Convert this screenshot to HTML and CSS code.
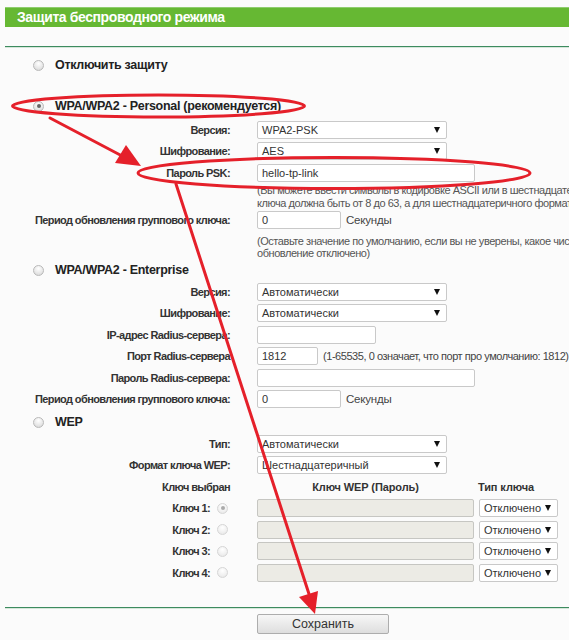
FILE: index.html
```html
<!DOCTYPE html>
<html lang="ru">
<head>
<meta charset="utf-8">
<link rel="stylesheet" href="styles.css">
</head>
<body>
<div class="page">
  <div class="hdr">Защита беспроводного режима</div>
  <div class="rule"></div>

  <div class="opt opt-first"><span class="radio"></span><span>Отключить защиту</span></div>

  <div class="opt opt-wpa"><span class="radio on"></span><span>WPA/WPA2 - Personal (рекомендуется)</span></div>
  <div class="field first"><div class="lbl">Версия:</div><div class="sel w190">WPA2-PSK</div></div>
  <div class="field"><div class="lbl">Шифрование:</div><div class="sel w190">AES</div></div>
  <div class="field"><div class="lbl">Пароль PSK:</div><div class="inp w218">hello-tp-link</div></div>
  <div class="help">(Вы можете ввести символы в кодировке ASCII или в шестнадцатеричном формате. Длина<br>ключа должна быть от 8 до 63, а для шестнадцатеричного формата - 64.)</div>
  <div class="field"><div class="lbl">Период обновления группового ключа:</div><div class="inp w84">0</div><span class="unit">Секунды</span></div>
  <div class="help note">(Оставьте значение по умолчанию, если вы не уверены, какое число ввести. 0 означает, что<br>обновление отключено)</div>

  <div class="opt"><span class="radio"></span><span>WPA/WPA2 - Enterprise</span></div>
  <div class="field"><div class="lbl">Версия:</div><div class="sel w190">Автоматически</div></div>
  <div class="field"><div class="lbl">Шифрование:</div><div class="sel w190">Автоматически</div></div>
  <div class="field"><div class="lbl">IP-адрес Radius-сервера:</div><div class="inp w119"></div></div>
  <div class="field"><div class="lbl">Порт Radius-сервера</div><div class="inp w61">1812</div><span class="unit port">(1-65535, 0 означает, что порт про умолчанию: 1812)</span></div>
  <div class="field"><div class="lbl">Пароль Radius-сервера:</div><div class="inp w218"></div></div>
  <div class="field"><div class="lbl">Период обновления группового ключа:</div><div class="inp w84">0</div><span class="unit">Секунды</span></div>

  <div class="opt opt-wep"><span class="radio"></span><span>WEP</span></div>
  <div class="field"><div class="lbl">Тип:</div><div class="sel w190">Автоматически</div></div>
  <div class="field"><div class="lbl">Формат ключа WEP:</div><div class="sel w190">Шестнадцатеричный</div></div>
  <div class="field"><div class="lbl">Ключ выбран</div><div class="colhead w217">Ключ WEP (Пароль)</div><div class="colhead type">Тип ключа</div></div>
  <div class="field"><div class="lbl key">Ключ 1:<span class="radio dis on"></span></div><div class="inp off w217"></div><div class="sel w79">Отключено</div></div>
  <div class="field"><div class="lbl key">Ключ 2:<span class="radio dis"></span></div><div class="inp off w217"></div><div class="sel w79">Отключено</div></div>
  <div class="field"><div class="lbl key">Ключ 3:<span class="radio dis"></span></div><div class="inp off w217"></div><div class="sel w79">Отключено</div></div>
  <div class="field"><div class="lbl key">Ключ 4:<span class="radio dis"></span></div><div class="inp off w217"></div><div class="sel w79">Отключено</div></div>

  <div class="rule rule-bottom"></div>
  <div class="actions"><button class="btn" type="button">Сохранить</button></div>

  <svg class="marks" width="569" height="640" viewBox="0 0 569 640" aria-hidden="true">
    <g fill="none" stroke="#e5202a" stroke-width="3" stroke-linecap="round">
      <ellipse cx="158.5" cy="106" rx="146" ry="11"/>
      <ellipse cx="334" cy="173" rx="196" ry="15.5"/>
      <line x1="50" y1="118" x2="124" y2="157"/>
      <line x1="176" y1="184" x2="309" y2="594"/>
    </g>
    <g fill="#e5202a">
      <polygon points="141,166 115,163 126,145"/>
      <polygon points="315,614 299,597 318,591"/>
    </g>
  </svg>
</div>
</body>
</html>
```
FILE: styles.css
```css
html, body {
  margin: 0;
  padding: 0;
}
body {
  width: 569px;
  height: 640px;
  overflow: hidden;
  background: #fbfbfb;
  font-family: "Liberation Sans", Arial, sans-serif;
  color: #333;
}
.page {
  position: relative;
  padding-top: 7px;
  height: 633px;
}
.hdr {
  margin-left: 5px;
  height: 20px;
  box-sizing: border-box;
  background: #66b833;
  border-top: 1px solid #8fcd6e;
  color: #fff;
  font-weight: bold;
  font-size: 14px;
  letter-spacing: -0.4px;
  line-height: 18px;
  padding-left: 12px;
}
.rule {
  margin: 19px 0 0 5px;
  height: 1px;
  background: #3d8b5f;
  border-bottom: 1px solid #d5e7da;
}
.rule-bottom {
  margin-top: 23px;
}
.opt {
  display: flex;
  align-items: center;
  height: 22px;
  padding-left: 33px;
  gap: 11px;
  font-weight: bold;
  font-size: 12.5px;
  letter-spacing: -0.3px;
  color: #222;
}
.opt-first { margin-top: 6px; }
.opt-wpa { margin-top: 19px; }
.opt-wep { margin-top: 1px; }
.radio {
  position: relative;
  flex: none;
  width: 11px;
  height: 11px;
  box-sizing: border-box;
  border-radius: 50%;
  border: 1px solid #b9b9b9;
  background: radial-gradient(circle at 50% 30%, #ffffff 0%, #e6e6e6 60%, #d2d2d2 100%);
}
.radio.on::after {
  content: "";
  position: absolute;
  left: 2.5px;
  top: 2.5px;
  width: 4px;
  height: 4px;
  border-radius: 50%;
  background: #666;
}
.radio.dis {
  border-color: #d6d6d6;
  background: radial-gradient(circle at 50% 30%, #ffffff 0%, #f0f0f0 60%, #e4e4e4 100%);
}
.radio.dis.on::after {
  background: #aaa;
}
.field {
  display: flex;
  align-items: center;
  height: 21.5px;
}
.field.first {
  margin-top: 2px;
}
.lbl {
  flex: none;
  width: 230px;
  margin-right: 27px;
  text-align: right;
  font-weight: bold;
  font-size: 11px;
  letter-spacing: -0.6px;
  color: #333;
  white-space: nowrap;
}
.lbl.key {
  display: flex;
  align-items: center;
  justify-content: flex-end;
  gap: 7px;
  box-sizing: border-box;
  padding-right: 2px;
}
.colhead {
  font-weight: bold;
  font-size: 11px;
  letter-spacing: -0.1px;
  color: #333;
  text-align: center;
}
.colhead.type {
  margin-left: 4px;
  text-align: left;
}
.sel, .inp {
  flex: none;
  box-sizing: border-box;
  height: 18px;
  border: 1px solid #c9c9c9;
  border-radius: 2px;
  background: #fff;
  display: flex;
  align-items: center;
  padding: 0 4px;
  font-size: 11px;
  color: #333;
  white-space: nowrap;
  overflow: hidden;
}
.sel {
  justify-content: space-between;
  padding-right: 6px;
}
.sel::after {
  content: "";
  flex: none;
  width: 0;
  height: 0;
  border-left: 3px solid transparent;
  border-right: 3px solid transparent;
  border-top: 6px solid #111;
}
.inp.off {
  background: #ecebe5;
  border-color: #c6c6c2;
}
.w190 { width: 190px; }
.w218 { width: 218px; }
.w217 { width: 217px; }
.w119 { width: 119px; }
.w84 { width: 84px; }
.w61 { width: 61px; }
.w79 { width: 79px; margin-left: 5px; }
.unit {
  margin-left: 5px;
  font-size: 11.5px;
  letter-spacing: -0.2px;
  color: #444;
  white-space: nowrap;
}
.unit.port {
  font-size: 11px;
  letter-spacing: -0.45px;
}
.help {
  padding-left: 257px;
  font-size: 11px;
  letter-spacing: -0.45px;
  line-height: 13px;
  color: #555;
  white-space: nowrap;
}
.help.note {
  margin-top: 4px;
  line-height: 12px;
  height: 24px;
}
.actions {
  padding: 5px 0 0 257px;
}
.btn {
  width: 132px;
  height: 20px;
  box-sizing: border-box;
  border: 1px solid #adadad;
  border-radius: 2px;
  background: linear-gradient(#f7f7f7, #dedede);
  font-family: "Liberation Sans", Arial, sans-serif;
  font-size: 12.5px;
  color: #333;
  padding: 0;
}
.marks {
  position: absolute;
  left: 0;
  top: 0;
  pointer-events: none;
}
```
